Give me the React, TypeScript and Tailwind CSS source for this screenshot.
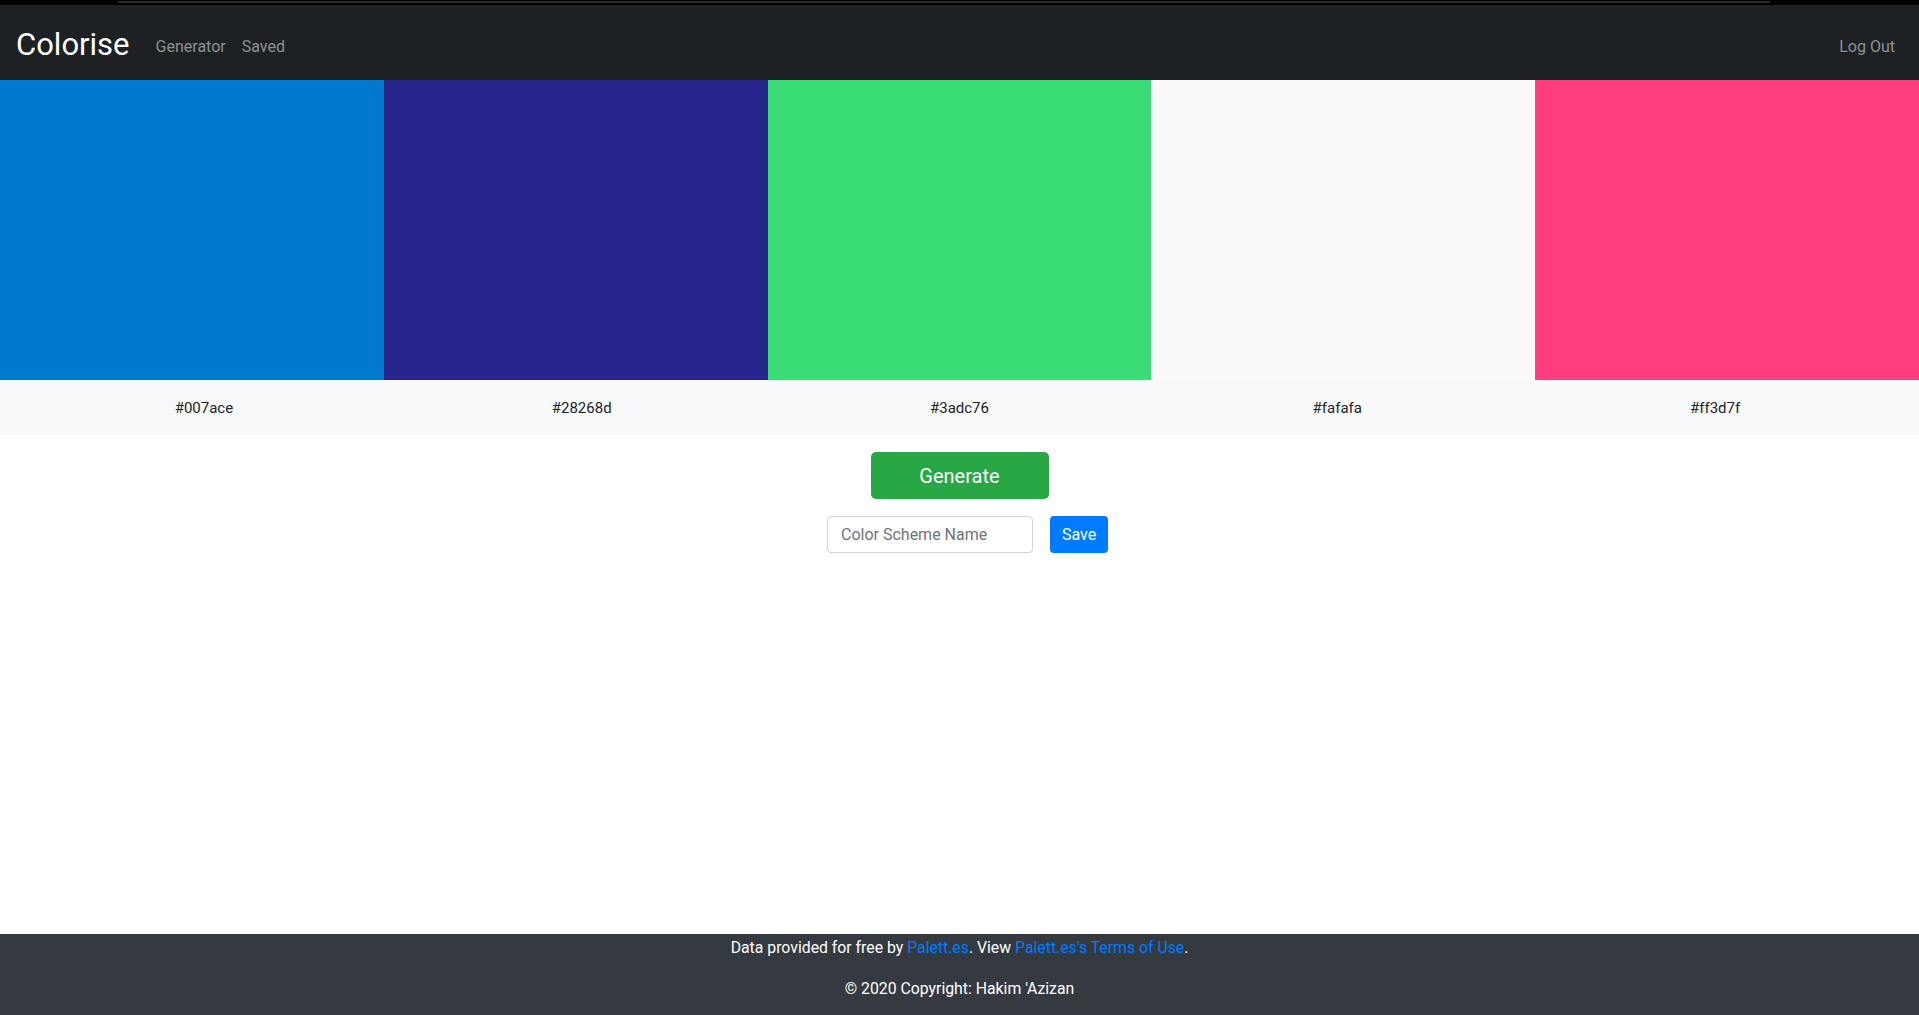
const colors = ['#007ace', '#28268d', '#3adc76', '#fafafa', '#ff3d7f'];

export default function App() {
  return (
    <div
      className="flex h-[1015px] flex-col bg-white text-[#212529]"
      style={{ fontFamily: 'Roboto, "Open Sans", sans-serif' }}
    >
      {/* window top edge */}
      <div className="h-[5px] bg-black pt-px">
        <div className="ml-[118px] mr-[149px] h-[2px] bg-[#2a2a2a]" />
      </div>

      {/* Navbar */}
      <nav className="flex h-[75px] items-center bg-[#1d2124] px-4 pt-2">
        <a className="mr-[18px] -mt-1 text-[31px] leading-none text-white">Colorise</a>
        <a className="px-2 text-base text-[#8f9193]">Generator</a>
        <a className="px-2 text-base text-[#8f9193]">Saved</a>
        <a className="ml-auto px-2 text-base text-[#8f9193]">Log Out</a>
      </nav>

      {/* Swatches */}
      <div className="grid h-[300px] grid-cols-5">
        {colors.map(c => (
          <div key={c} style={{ backgroundColor: c }} />
        ))}
      </div>

      {/* Hex labels */}
      <div className="grid h-[55px] grid-cols-5 items-center bg-[#f8f9fa] px-[15px] pt-px text-[15px]">
        {colors.map(c => (
          <div key={c} className="text-center">{c}</div>
        ))}
      </div>

      {/* Controls */}
      <main className="flex flex-1 flex-col items-center pt-[17px]">
        <button className="h-[47px] w-[178px] rounded-[5px] bg-[#28a745] text-[20px] text-white">
          Generate
        </button>
        <div className="mt-[17px] ml-4 flex gap-[17px]">
          <input
            placeholder="Color Scheme Name"
            className="h-[37px] w-[206px] rounded-[4px] border border-[#ced4da] bg-white px-[13px] text-base text-[#495057] placeholder:text-[#6c757d]"
          />
          <button className="h-[37px] w-[58px] rounded-[4px] bg-[#007bff] text-base text-white">
            Save
          </button>
        </div>
      </main>

      {/* Footer */}
      <footer className="h-[81px] bg-[#343a40] pt-[2px] text-center text-[15.8px] leading-6 text-white">
        <div>
          Data provided for free by <a className="text-[#007bff]">Palett.es</a>. View{' '}
          <a className="text-[#007bff]">Palett.es's Terms of Use</a>.
        </div>
        <div className="pt-[17px] pb-4">© 2020 Copyright: Hakim 'Azizan</div>
      </footer>
    </div>
  );
}
